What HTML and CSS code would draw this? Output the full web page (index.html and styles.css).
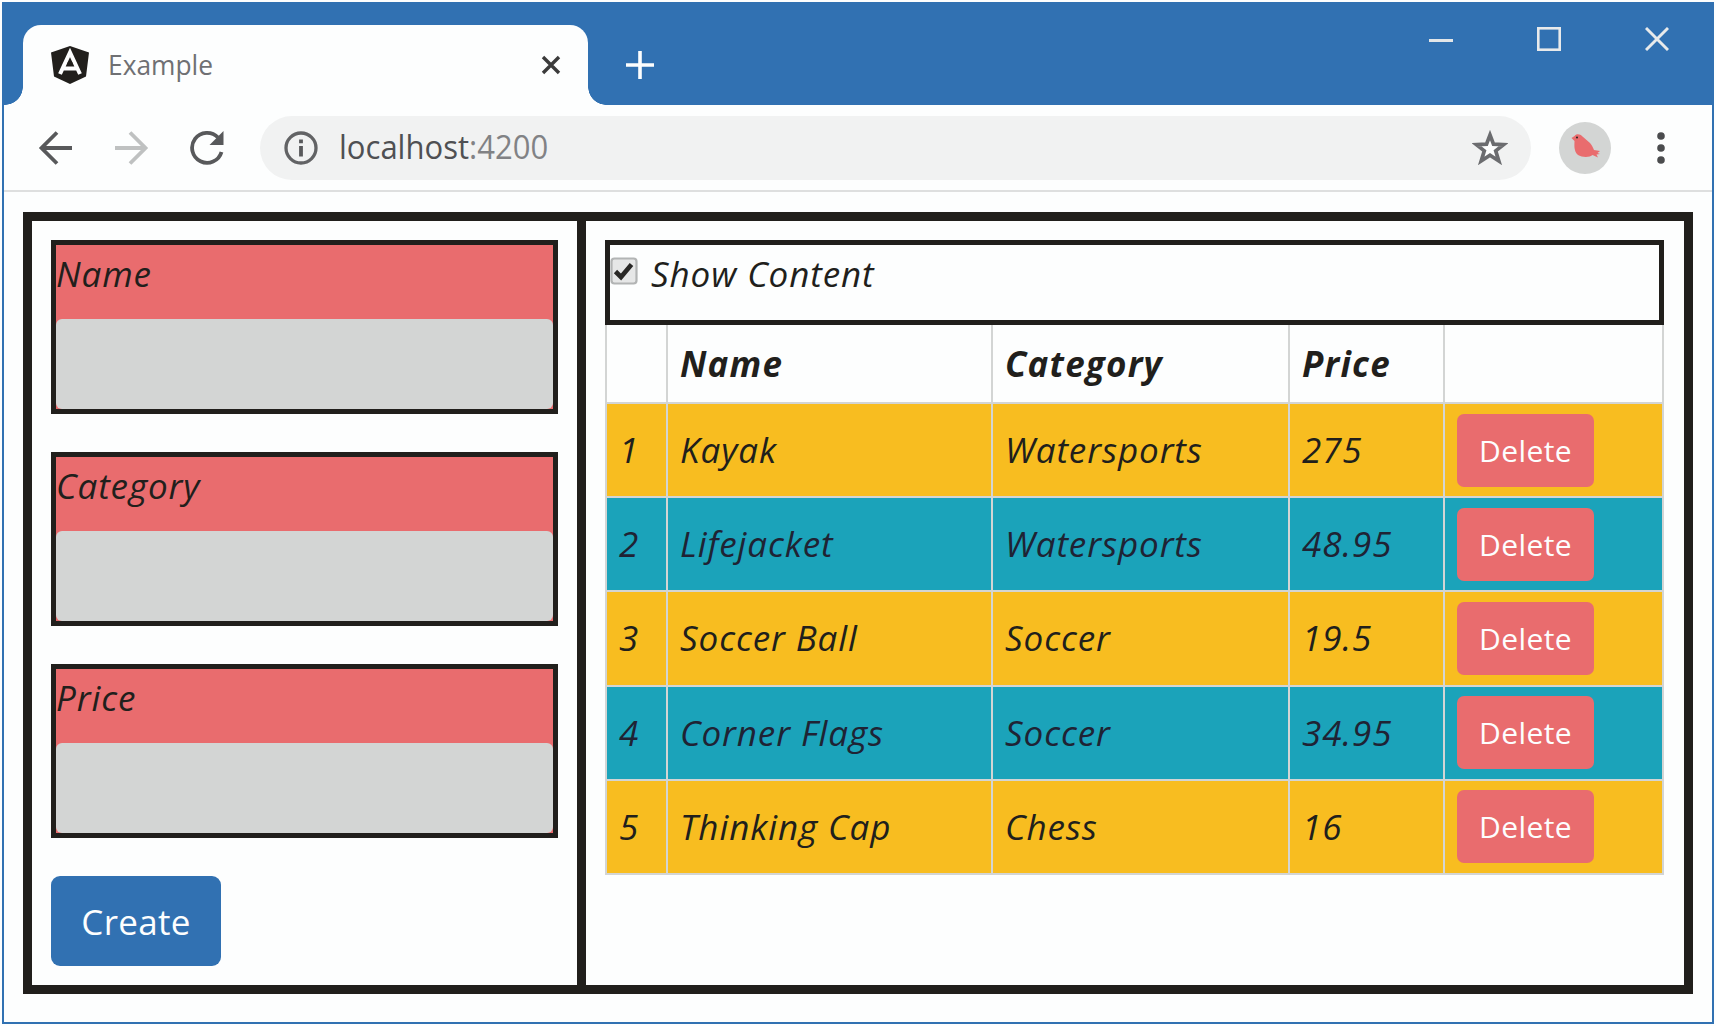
FILE: index.html
```html
<!DOCTYPE html>
<html lang="en">
<head>
<meta charset="utf-8">
<title>Example</title>
<link rel="stylesheet" href="styles.css">
</head>
<body>
<div class="window">
  <header class="titlebar">
    <div class="tab">
      <svg class="logo" width="40" height="40" viewBox="0 0 40 40"><path d="M20 1 39 7.500 36 31.500 20 39 4 31.500 1 7.500Z" fill="#211f1c"/><path d="M10 29 20 7.500 30 29M13.500 23.500H26.500" fill="none" stroke="#fdfefe" stroke-width="4"/><circle cx="20" cy="18.500" r="2.500" fill="#211f1c"/></svg>
      <span class="tab-title">Example</span>
      <svg class="tab-close" width="24" height="24" viewBox="0 0 24 24"><path d="M4 4 20 20M20 4 4 20" stroke="#3b3b3b" stroke-width="3.400"/></svg>
    </div>
    <svg class="new-tab" width="30" height="30" viewBox="0 0 30 30"><path d="M15 1V29M1 15H29" stroke="#fdfefe" stroke-width="3.600"/></svg>
    <div class="controls">
      <svg width="24" height="24" viewBox="0 0 24 24"><path d="M0 13.500H24" stroke="#e3e6e8" stroke-width="3"/></svg>
      <svg width="24" height="24" viewBox="0 0 24 24"><rect x="1.300" y="1.300" width="21.400" height="21.400" fill="none" stroke="#e8eaeb" stroke-width="2.600"/></svg>
      <svg width="24" height="24" viewBox="0 0 24 24"><path d="M1 1 23 23M23 1 1 23" stroke="#e8eaeb" stroke-width="2.900"/></svg>
    </div>
  </header>
  <nav class="toolbar">
    <svg width="36" height="36" viewBox="0 0 36 36"><path d="M34 18H4M19 2.500 3.500 18 19 33.500" fill="none" stroke="#58595b" stroke-width="3.800"/></svg>
    <svg width="36" height="36" viewBox="0 0 36 36"><path d="M2 18H32M17 2.500 32.500 18 17 33.500" fill="none" stroke="#bfc1c1" stroke-width="3.800"/></svg>
    <svg class="reload" width="36" height="36" viewBox="0 0 36 36"><path d="M32.500 22A15 15 0 1 1 29 7.500" fill="none" stroke="#58595b" stroke-width="3.800"/><path d="M34.500 1V15H20.500Z" fill="#58595b"/></svg>
    <div class="address">
      <svg width="36" height="36" viewBox="0 0 36 36"><circle cx="18" cy="18" r="15" fill="none" stroke="#626365" stroke-width="3.300"/><path d="M18 16V26.500M18 9.500V13.200" stroke="#58595b" stroke-width="3.800"/></svg>
      <span class="url">localhost<span class="port">:4200</span></span>
      <svg class="star" width="36" height="36" viewBox="0 0 36 36"><path d="M18 5 21.500 14.200 31.500 14.600 23.700 20.800 26.800 31 18 25.200 9.200 31 12.300 20.800 4.500 14.600 14.500 14.200Z" fill="#fdfefe" stroke="#6b6c6f" stroke-width="3.700"/></svg>
    </div>
    <svg class="avatar" width="52" height="52" viewBox="0 0 52 52"><circle cx="26" cy="26" r="26" fill="#d3d5d4"/><path d="M12.500 16 15.500 14C17 11.500 21 11.500 23.500 14.500L31 21C33 23 34 26 35 28L41 29 38.500 31 41 32 37.500 32.500 39 35.500 33.500 33C31 35.500 23 35.500 19 33C14.500 29 15.500 23 15.500 19Z" fill="#e96c6e"/><circle cx="18" cy="15.500" r="1" fill="#211f1c"/></svg>
    <svg class="menu" width="8" height="32" viewBox="0 0 8 32"><g fill="#4b4c4e"><circle cx="4" cy="4" r="3.800"/><circle cx="4" cy="16" r="3.800"/><circle cx="4" cy="28" r="3.800"/></g></svg>
  </nav>
  <main class="frame">
    <form class="panel form">
      <label class="field"><span class="label">Name</span><input class="input" type="text"></label>
      <label class="field"><span class="label">Category</span><input class="input" type="text"></label>
      <label class="field"><span class="label">Price</span><input class="input" type="text"></label>
      <button class="create" type="button">Create</button>
    </form>
    <section class="panel content">
      <label class="toggle">
        <svg width="28" height="28" viewBox="0 0 28 28"><rect x="1.500" y="1.500" width="25" height="25" rx="3" fill="#e6e7e7" stroke="#b2b4b4" stroke-width="2.200"/><path d="M5.500 14.500 11 20 21.500 7.500" fill="none" stroke="#292826" stroke-width="4.600"/></svg>
        <span>Show Content</span>
      </label>
      <table class="products">
        <colgroup><col class="c-num"><col class="c-name"><col class="c-cat"><col class="c-price"><col></colgroup>
        <thead><tr><th></th><th>Name</th><th>Category</th><th>Price</th><th></th></tr></thead>
        <tbody>
          <tr><td>1</td><td>Kayak</td><td>Watersports</td><td>275</td><td><button class="delete" type="button">Delete</button></td></tr>
          <tr><td>2</td><td>Lifejacket</td><td>Watersports</td><td>48.95</td><td><button class="delete" type="button">Delete</button></td></tr>
          <tr><td>3</td><td>Soccer Ball</td><td>Soccer</td><td>19.5</td><td><button class="delete" type="button">Delete</button></td></tr>
          <tr><td>4</td><td>Corner Flags</td><td>Soccer</td><td>34.95</td><td><button class="delete" type="button">Delete</button></td></tr>
          <tr><td>5</td><td>Thinking Cap</td><td>Chess</td><td>16</td><td><button class="delete" type="button">Delete</button></td></tr>
        </tbody>
      </table>
    </section>
  </main>
</div>
</body>
</html>
```
FILE: styles.css
```css
* { box-sizing: border-box; }
body {
  margin: 0;
  padding: 2px;
  height: 1026px;
  background: #fdfefe;
  color: #211f1c;
  font-family: "Open Sans", "Noto Sans", sans-serif;
  font-size: 35px;
}
svg { display: block; flex: none; }
button { font-family: inherit; border: 0; color: #fdfefe; }
.window {
  height: 1022px;
  width: 1712px;
  border: 2px solid #3171b2;
  border-top: 0;
  background: #fdfefe;
}
.titlebar {
  height: 103px;
  background: #3171b2;
  display: flex;
  align-items: flex-end;
}
.tab {
  position: relative;
  width: 565px;
  height: 80px;
  margin-left: 19px;
  padding: 0 25px 0 27px;
  display: flex;
  align-items: center;
  background: #fdfefe;
  border-radius: 18px 18px 0 0;
}
.tab::before, .tab::after {
  content: "";
  position: absolute;
  bottom: 0;
  width: 18px;
  height: 18px;
}
.tab::before { right: 100%; background: radial-gradient(circle at 0 0, #3171b2 17.5px, #fdfefe 18px); }
.tab::after { left: 100%; background: radial-gradient(circle at 100% 0, #3171b2 17.5px, #fdfefe 18px); }
.tab-title {
  margin: 0 0 2px 18px;
  font-size: 28px;
  color: #6f7073;
  transform: scaleX(.94);
  transform-origin: left;
}
.tab-close { margin-left: auto; }
.new-tab { margin: 0 0 25px 37px; }
.controls {
  display: flex;
  gap: 84px;
  margin: 0 43px 0 auto;
  align-self: flex-start;
  padding-top: 25px;
}
.toolbar {
  height: 87px;
  border-bottom: 2px solid #dedfdf;
  display: flex;
  align-items: center;
  padding: 0 33px 0 34px;
}
.toolbar > svg { margin-right: 39px; }
.toolbar > .reload { margin-right: 35px; margin-left: 1px; }
.address {
  flex: 1;
  height: 64px;
  border-radius: 32px;
  background: #f1f2f2;
  display: flex;
  align-items: center;
  padding: 0 23px;
}
.url {
  margin: 0 0 2px 20px;
  font-size: 32px;
  color: #4f5053;
  transform: scaleX(.97);
  transform-origin: left;
}
.port { color: #818285; }
.star { margin-left: auto; }
.toolbar > .avatar { margin: 0 46px 0 28px; }
.toolbar > .menu { margin-right: 14px; }
.frame {
  margin: 20px 19px 0;
  height: 782px;
  border: 9px solid #211f1c;
  display: grid;
  grid-template-columns: 554px 1fr;
  font-style: italic;
  letter-spacing: .9px;
}
.panel { padding: 19px; }
.form { border-right: 9px solid #211f1c; }
.field {
  display: block;
  height: 174px;
  margin-bottom: 38px;
  border: 5px solid #211f1c;
  background: #e96c6e;
}
.label { display: block; height: 74px; line-height: 57px; }
.input {
  display: block;
  width: 100%;
  height: 90px;
  border: 0;
  border-radius: 6px;
  background: #d3d5d4;
}
.create {
  display: block;
  width: 170px;
  height: 90px;
  border-radius: 9px;
  background: #3171b2;
  font-size: 35px;
  letter-spacing: .3px;
}
.toggle {
  display: flex;
  align-items: flex-start;
  width: 1059px;
  height: 85px;
  border: 5px solid #211f1c;
  line-height: 57px;
}
.toggle svg { margin: 12px 13px 0 0; }
.products {
  width: 1059px;
  table-layout: fixed;
  border-collapse: collapse;
}
.c-num { width: 61px; }
.c-name { width: 325px; }
.c-cat { width: 297px; }
.c-price { width: 155px; }
.products th, .products td {
  padding: 0 12px;
  border: 2px solid #d3d5d4;
  text-align: left;
  line-height: 46px;
}
.products th { height: 78px; border-top: 0; letter-spacing: 1.2px; }
.products td { height: 94.2px; }
.products tbody tr { background: #f8bd20; }
.products tbody tr:nth-child(even) { background: #1ba3ba; color: #1f2334; }
.delete {
  display: block;
  width: 137px;
  height: 73px;
  border-radius: 7px;
  background: #e96c6e;
  font-size: 30px;
  letter-spacing: .4px;
}
```
